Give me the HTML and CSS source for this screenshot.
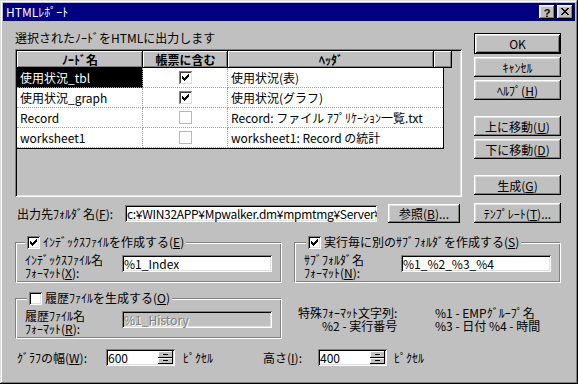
FILE: index.html
```html
<!DOCTYPE html>
<html lang="ja">
<head>
    <meta charset="UTF-8">
    <title>HTMLﾚﾎﾟｰﾄ</title>
    <link rel="stylesheet" href="styles.css">
</head>
<body>
<div class="dialog">
    <div class="titlebar">
        <span class="title">HTMLﾚﾎﾟｰﾄ</span>
        <span class="tbtn help">?</span>
        <span class="tbtn close">
            <svg width="16" height="14" viewBox="0 0 16 14" shape-rendering="crispEdges"><path d="M4 3h2v1H4zM10 3h2v1h-2zM5 4h2v1H5zM9 4h2v1H9zM6 5h4v1H6zM7 6h2v1H7zM6 7h4v1H6zM5 8h2v1H5zM9 8h2v1H9zM4 9h2v1H4zM10 9h2v1h-2z" fill="#000"/></svg>
        </span>
    </div>

    <div class="main">
        <div class="top">
            <div class="left">
                <div class="intro">選択されたﾉｰﾄﾞをHTMLに出力します</div>
                <div class="list">
                    <div class="list-head">
                        <div class="hcell c1">ﾉｰﾄﾞ名</div>
                        <div class="hcell c2">帳票に含む</div>
                        <div class="hcell c3">ﾍｯﾀﾞ</div>
                        <div class="hcell c4"></div>
                    </div>
                    <div class="rows">
                        <div class="row">
                            <div class="cell c1 sel">使用状況_tbl</div>
                            <div class="cell c2"><span class="chk grid"><svg width="13" height="13" viewBox="0 0 13 13" shape-rendering="crispEdges"><path d="M3 5h1v3H3zM4 6h1v3H4zM5 7h1v3H5zM6 6h1v3H6zM7 5h1v3H7zM8 4h1v3H8zM9 3h1v3H9z"/></svg></span></div>
                            <div class="cell c3">使用状況(表)</div>
                        </div>
                        <div class="row">
                            <div class="cell c1">使用状況_graph</div>
                            <div class="cell c2"><span class="chk grid"><svg width="13" height="13" viewBox="0 0 13 13" shape-rendering="crispEdges"><path d="M3 5h1v3H3zM4 6h1v3H4zM5 7h1v3H5zM6 6h1v3H6zM7 5h1v3H7zM8 4h1v3H8zM9 3h1v3H9z"/></svg></span></div>
                            <div class="cell c3">使用状況(グラフ)</div>
                        </div>
                        <div class="row">
                            <div class="cell c1">Record</div>
                            <div class="cell c2"><span class="chk off"></span></div>
                            <div class="cell c3">Record: ファイル ｱﾌﾟﾘｹｰｼｮﾝ一覧.txt</div>
                        </div>
                        <div class="row">
                            <div class="cell c1">worksheet1</div>
                            <div class="cell c2"><span class="chk off"></span></div>
                            <div class="cell c3">worksheet1: Record の統計</div>
                        </div>
                    </div>
                </div>
                <div class="folder-row">
                    <span class="lbl">出力先ﾌｫﾙﾀﾞ名(<u>F</u>):</span>
                    <div class="field path">c:¥WIN32APP¥Mpwalker.dm¥mpmtmg¥Server¥va</div>
                    <div class="btn browse">参照(<u>B</u>)...</div>
                </div>
            </div>

            <div class="right">
                <div class="btn default">OK</div>
                <div class="btn gap-s">ｷｬﾝｾﾙ</div>
                <div class="btn gap-s">ﾍﾙﾌﾟ(<u>H</u>)</div>
                <div class="btn gap-l">上に移動(<u>U</u>)</div>
                <div class="btn gap-s">下に移動(<u>D</u>)</div>
                <div class="btn gap-l">生成(<u>G</u>)</div>
                <div class="btn gap-m">ﾃﾝﾌﾟﾚｰﾄ(<u>T</u>)...</div>
            </div>
        </div>

        <div class="groups">
            <fieldset class="group">
                <legend>
                    <span class="chk"><svg width="13" height="13" viewBox="0 0 13 13" shape-rendering="crispEdges"><path d="M3 5h1v3H3zM4 6h1v3H4zM5 7h1v3H5zM6 6h1v3H6zM7 5h1v3H7zM8 4h1v3H8zM9 3h1v3H9z"/></svg></span>
                    <span>ｲﾝﾃﾞｯｸｽﾌｧｲﾙを作成する(<u>E</u>)</span>
                </legend>
                <div class="gcontent">
                    <div class="glabel"><div>ｲﾝﾃﾞｯｸｽﾌｧｲﾙ名</div><div>ﾌｫｰﾏｯﾄ(<u>X</u>):</div></div>
                    <div class="field fmt">%1_Index</div>
                </div>
            </fieldset>

            <fieldset class="group">
                <legend>
                    <span class="chk"><svg width="13" height="13" viewBox="0 0 13 13" shape-rendering="crispEdges"><path d="M3 5h1v3H3zM4 6h1v3H4zM5 7h1v3H5zM6 6h1v3H6zM7 5h1v3H7zM8 4h1v3H8zM9 3h1v3H9z"/></svg></span>
                    <span>実行毎に別のｻﾌﾞﾌｫﾙﾀﾞを作成する(<u>S</u>)</span>
                </legend>
                <div class="gcontent">
                    <div class="glabel"><div>ｻﾌﾞﾌｫﾙﾀﾞ名</div><div>ﾌｫｰﾏｯﾄ(<u>N</u>):</div></div>
                    <div class="field fmt">%1_%2_%3_%4</div>
                </div>
            </fieldset>

            <fieldset class="group">
                <legend>
                    <span class="chk"></span>
                    <span>履歴ﾌｧｲﾙを生成する(<u>O</u>)</span>
                </legend>
                <div class="gcontent">
                    <div class="glabel"><div>履歴ﾌｧｲﾙ名</div><div>ﾌｫｰﾏｯﾄ(<u>R</u>):</div></div>
                    <div class="field fmt disabled">%1_History</div>
                </div>
            </fieldset>

            <div class="special">
                <span>特殊ﾌｫｰﾏｯﾄ文字列:</span>
                <span>%1 - EMPｸﾞﾙｰﾌﾟ名</span>
                <span class="indent">%2 - 実行番号</span>
                <span>%3 - 日付 %4 - 時間</span>
            </div>
        </div>

        <div class="size-row">
            <span class="lbl w">ｸﾞﾗﾌの幅(<u>W</u>):</span>
            <div class="spin">
                <span class="val">600</span>
                <span class="spin-btns"><span class="sb"></span><span class="sb"></span></span>
            </div>
            <span class="unit">ﾋﾟｸｾﾙ</span>
            <span class="lbl h">高さ(<u>I</u>):</span>
            <div class="spin">
                <span class="val">400</span>
                <span class="spin-btns"><span class="sb"></span><span class="sb"></span></span>
            </div>
            <span class="unit last">ﾋﾟｸｾﾙ</span>
        </div>
    </div>
</div>
</body>
</html>
```

FILE: styles.css
```css
* {
    box-sizing: border-box;
}
body {
    margin: 0;
    background: #c0c0c0;
    color: #000;
    font-family: "Noto Sans CJK JP", "Noto Sans", sans-serif;
    font-size: 12px;
}
u {
    text-underline-offset: 1px;
}

.dialog {
    width: 578px;
    height: 384px;
    padding: 3px;
    background: #c0c0c0;
    box-shadow: inset -1px -1px #000, inset 1px 1px #dfdfdf, inset -2px -2px #808080, inset 2px 2px #fff;
}

/* title bar */
.titlebar {
    display: flex;
    align-items: center;
    height: 18px;
    padding: 0 2px 0 3px;
    background: #000080;
    color: #fff;
}
.title {
    flex: 1;
    line-height: 18px;
}
.tbtn {
    width: 16px;
    height: 14px;
    display: flex;
    align-items: center;
    justify-content: center;
    background: #c0c0c0;
    color: #000;
    box-shadow: inset -1px -1px #000, inset 1px 1px #fff, inset -2px -2px #808080, inset 2px 2px #dfdfdf;
}
.tbtn.help {
    font: bold 11px "Liberation Sans", sans-serif;
    padding-top: 1px;
}
.tbtn.close {
    margin-left: 2px;
}
.tbtn svg {
    display: block;
}

.main {
    padding: 0 14px 0 12px;
}

.top {
    display: flex;
    justify-content: space-between;
}
.left {
    width: 447px;
}
.intro {
    margin-top: 9px;
    height: 16px;
    line-height: 16px;
}

/* node list */
.list {
    margin-top: 3px;
    height: 148px;
    padding: 2px;
    box-shadow: inset 1px 1px #808080, inset -1px -1px #fff, inset 2px 2px #000, inset -2px -2px #dfdfdf;
}
.list-head {
    display: flex;
    height: 17px;
}
.hcell {
    height: 17px;
    line-height: 17px;
    text-align: center;
    font-weight: bold;
    background: #c0c0c0;
    box-shadow: inset -1px -1px #000, inset 1px 1px #fff, inset -2px -2px #808080;
}
.hcell.c1 { width: 126px; }
.hcell.c2 { width: 85px; }
.hcell.c3 { width: 206px; }
.hcell.c4 { width: 18px; }

.rows {
    width: 427px;
    border-right: 1px solid #000;
    border-bottom: 1px solid #000;
}
.row {
    display: flex;
    height: 20px;
}
.cell {
    height: 20px;
    line-height: 19px;
    padding-left: 3px;
    background: #fff;
    border-right: 1px dotted #a0a0a0;
    border-bottom: 1px dotted #a0a0a0;
    white-space: nowrap;
    overflow: hidden;
}
.cell.c1 { width: 126px; }
.cell.c2 {
    width: 85px;
    padding: 0;
    display: flex;
    align-items: center;
    justify-content: center;
}
.cell.c3 {
    width: 215px;
    border-right: none;
}
.cell.sel {
    background: #000;
    color: #fff;
}

/* checkboxes */
.chk {
    width: 13px;
    height: 13px;
    flex: none;
    display: inline-block;
    background: #fff;
    box-shadow: inset 1px 1px #808080, inset -1px -1px #fff, inset 2px 2px #000, inset -2px -2px #dfdfdf;
}
.chk svg {
    display: block;
}
.chk.grid {
    box-shadow: inset 1px 1px #808080, inset -1px -1px #dfdfdf, inset 2px 2px #404040;
}
.chk.off {
    box-shadow: inset 0 0 0 1px #b8b8b8;
}

/* folder row */
.folder-row {
    display: flex;
    align-items: center;
    height: 19px;
    margin-top: 7px;
}
.folder-row .lbl {
    width: 110px;
    padding-left: 2px;
    white-space: nowrap;
}
.field {
    height: 17px;
    padding: 0 2px;
    line-height: 17px;
    background: #fff;
    white-space: nowrap;
    overflow: hidden;
    box-shadow: inset 1px 1px #808080, inset -1px -1px #fff, inset 2px 2px #000, inset -2px -2px #dfdfdf;
}
.field.path {
    width: 252px;
    letter-spacing: -0.3px;
}
.field.disabled {
    background: #c0c0c0;
    color: #808080;
    text-shadow: 1px 1px #fff;
}

/* buttons */
.right {
    width: 87px;
    padding-top: 12px;
    display: flex;
    flex-direction: column;
}
.btn {
    height: 20px;
    display: flex;
    align-items: center;
    justify-content: center;
    background: #c0c0c0;
    white-space: nowrap;
    box-shadow: inset -1px -1px #000, inset 1px 1px #fff, inset -2px -2px #808080, inset 2px 2px #dfdfdf;
}
.btn.default {
    height: 21px;
    box-shadow: inset 0 0 0 1px #000, inset 2px 2px #fff, inset -2px -2px #000, inset 3px 3px #dfdfdf, inset -3px -3px #808080;
}
.btn.browse {
    width: 72px;
    height: 19px;
    margin-left: 11px;
}
.gap-s { margin-top: 3px; }
.gap-m { margin-top: 8px; }
.gap-l { margin-top: 16px; }

/* option groups */
.groups {
    display: grid;
    grid-template-columns: 267px 267px;
    column-gap: 12px;
    row-gap: 8px;
    margin-top: 12px;
}
.group {
    margin: 0;
    min-width: 0;
    padding: 5px 9px 4px;
    border-top: 1px solid #808080;
    border-left: 1px solid #808080;
    border-right: 1px solid #fff;
    border-bottom: 1px solid #fff;
    box-shadow: inset 1px 1px #fff, inset -1px -1px #808080;
}
.group legend {
    display: flex;
    align-items: center;
    gap: 3px;
    height: 14px;
    line-height: 14px;
    padding: 0 2px;
    background: #c0c0c0;
    white-space: nowrap;
}
.group + .group legend {
    margin-left: 2px;
}
.gcontent {
    display: flex;
    height: 24px;
}
.glabel {
    width: 97px;
    margin-top: -1px;
    white-space: nowrap;
}
.glabel div {
    height: 13px;
    line-height: 13px;
}
.field.fmt {
    width: 150px;
    margin-top: 1px;
}

.special {
    display: grid;
    grid-template-columns: 137px auto;
    grid-auto-rows: 13px;
    padding: 15px 0 0 4px;
    line-height: 13px;
    white-space: nowrap;
}
.special .indent {
    padding-left: 24px;
}

/* size row */
.size-row {
    display: flex;
    align-items: center;
    height: 17px;
    margin-top: 10px;
}
.size-row .lbl {
    white-space: nowrap;
}
.size-row .lbl.w {
    width: 91px;
    padding-left: 2px;
}
.size-row .lbl.h {
    width: 55px;
}
.spin {
    width: 69px;
    height: 17px;
    padding: 2px;
    display: flex;
    background: #fff;
    box-shadow: inset 1px 1px #808080, inset -1px -1px #fff, inset 2px 2px #000, inset -2px -2px #dfdfdf;
}
.spin .val {
    flex: 1;
    line-height: 13px;
}
.spin-btns {
    width: 15px;
    display: flex;
    flex-direction: column;
}
.sb {
    flex: 1;
    display: flex;
    align-items: center;
    justify-content: center;
    background: #c0c0c0;
    box-shadow: inset -1px -1px #000, inset 1px 1px #fff;
}
.sb::after {
    content: "";
    width: 5px;
    height: 1px;
    background: #000;
}
.unit {
    width: 80px;
    margin-left: 8px;
    white-space: nowrap;
}
.unit.last {
    margin-left: 7px;
}
```
